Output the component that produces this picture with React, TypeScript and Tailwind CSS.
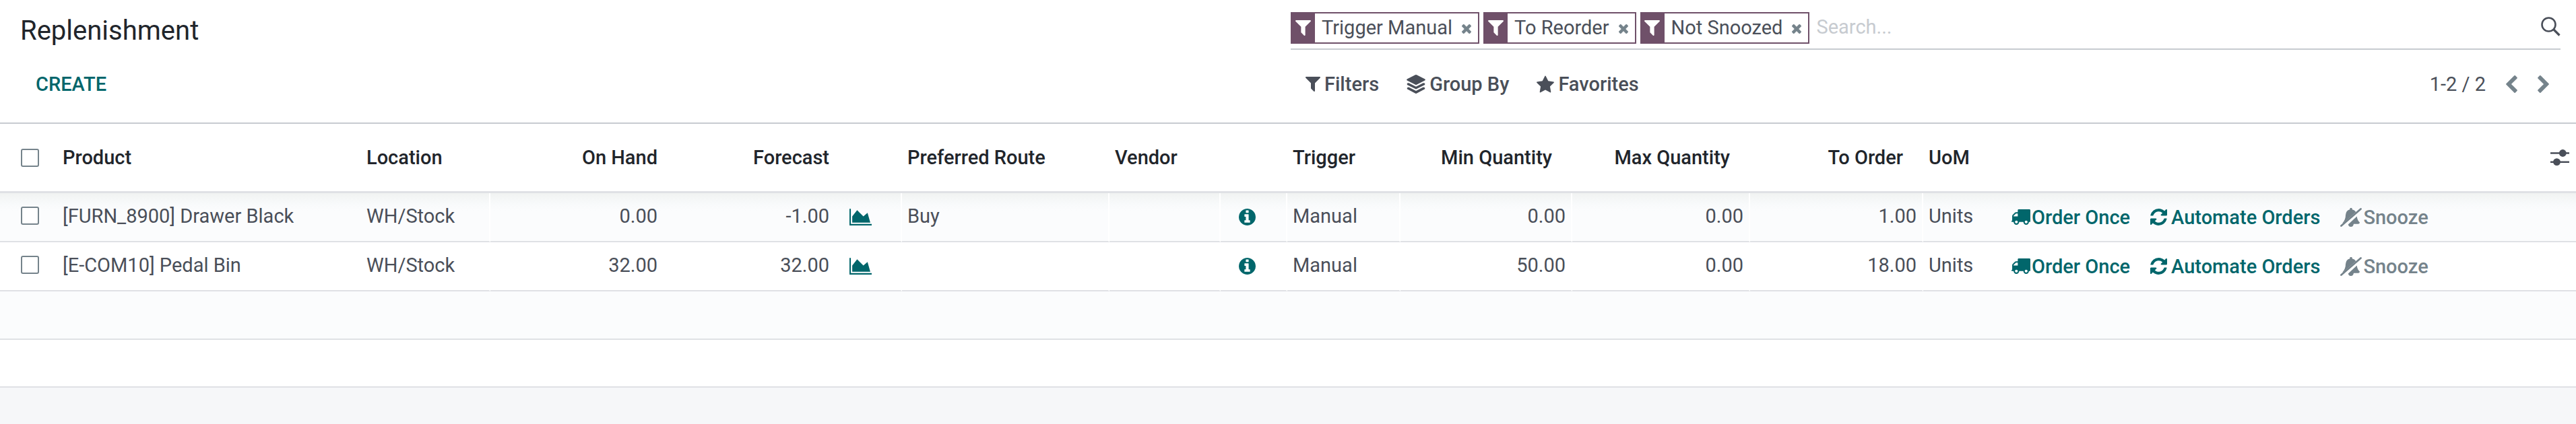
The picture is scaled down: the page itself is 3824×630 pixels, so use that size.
import { ReactNode } from "react";

type IconProps = { className?: string };

function FilterIcon({ className }: IconProps) {
  return (
    <svg viewBox="192 256 1408 1408" className={className} fill="currentColor" aria-hidden="true">
      <path d="M1595 295q17 41-14 70l-493 493v742q0 42-39 59-13 5-25 5-27 0-45-19l-256-256q-19-19-19-45v-486l-493-493q-31-29-14-70 17-39 59-39h1280q42 0 59 39z" />
    </svg>
  );
}

function TimesIcon({ className }: IconProps) {
  return (
    <svg viewBox="302 366 1188 1188" className={className} fill="currentColor" aria-hidden="true">
      <path d="M1490 1322q0 40-28 68l-136 136q-28 28-68 28t-68-28l-294-294-294 294q-28 28-68 28t-68-28l-136-136q-28-28-28-68t28-68l294-294-294-294q-28-28-28-68t28-68l136-136q28-28 68-28t68 28l294 294 294-294q28-28 68-28t68 28l136 136q28 28 28 68t-28 68l-294 294 294 294q28 28 28 68z" />
    </svg>
  );
}

function StarIcon({ className }: IconProps) {
  return (
    <svg viewBox="64 32 1664 1587" className={className} fill="currentColor" aria-hidden="true">
      <path d="M1728 647q0 22-26 48l-363 354 86 500q1 7 1 20 0 21-10.500 35.500t-30.500 14.500q-19 0-40-12l-449-236-449 236q-22 12-40 12-21 0-31.500-14.500t-10.500-35.500q0-6 2-20l86-500-364-354q-25-27-25-48 0-37 56-46l502-73 225-455q19-41 49-41t49 41l225 455 502 73q56 9 56 46z" />
    </svg>
  );
}

function LayersIcon({ className }: IconProps) {
  return (
    <svg viewBox="0 0 28 28" className={className} fill="currentColor" aria-hidden="true">
      <path d="M13 .3q1-.5 2 0L27.300 6.600q1 .9 0 1.800L15 14.700q-1 .5-2 0L.7 8.400q-1-.9 0-1.800z" />
      <path d="M.8 12.700 3.200 12.200 14 17.700 24.800 12.200 27.200 12.700V15L14 21.500.8 15z" />
      <path d="M.8 19.200 3.200 18.500 14 24 24.800 18.500 27.200 19.200V21.300L15 27.700q-1 .5-2 0L.8 21.300z" />
    </svg>
  );
}

function SearchIcon({ className }: IconProps) {
  return (
    <svg viewBox="0 0 29 29" className={className} fill="none" stroke="currentColor" strokeWidth="2.600" aria-hidden="true">
      <circle cx="11.500" cy="11.500" r="10" />
      <path d="M18.500 18.500 27.500 27.500" strokeWidth="3.200" />
    </svg>
  );
}

function ChevronLeftIcon({ className }: IconProps) {
  return (
    <svg viewBox="410 26 1036 1612" className={className} fill="currentColor" aria-hidden="true">
      <path d="M1427 301l-531 531 531 531q19 19 19 45t-19 45l-166 166q-19 19-45 19t-45-19l-742-742q-19-19-19-45t19-45l742-742q19-19 45-19t45 19l166 166q19 19 19 45t-19 45z" />
    </svg>
  );
}

function ChevronRightIcon({ className }: IconProps) {
  return (
    <svg viewBox="346 26 1036 1612" className={className} fill="currentColor" aria-hidden="true">
      <path d="M1363 877l-742 742q-19 19-45 19t-45-19l-166-166q-19-19-19-45t19-45l531-531-531-531q-19-19-19-45t19-45l166-166q19-19 45-19t45 19l742 742q19 19 19 45t-19 45z" />
    </svg>
  );
}

function SlidersIcon({ className }: IconProps) {
  return (
    <svg viewBox="0 0 28 24" className={className} fill="currentColor" aria-hidden="true">
      <path d="M0 4.300h28v2.400H0zM0 17.500h28v2.400H0z" />
      <circle cx="18.300" cy="5.500" r="5.400" />
      <circle cx="9.500" cy="18.600" r="5.400" />
    </svg>
  );
}

function AreaChartIcon({ className }: IconProps) {
  return (
    <svg viewBox="0 128 2048 1536" className={className} fill="currentColor" aria-hidden="true">
      <path d="M2048 1536v128h-2048v-1536h128v1408h1920zm-384-1024l256 896h-1664v-576l448-576 576 576z" />
    </svg>
  );
}

function InfoIcon({ className }: IconProps) {
  return (
    <svg viewBox="128 128 1536 1536" className={className} fill="currentColor" aria-hidden="true">
      <path d="M1152 1376v-160q0-14-9-23t-23-9h-96v-512q0-14-9-23t-23-9h-320q-14 0-23 9t-9 23v160q0 14 9 23t23 9h96v320h-96q-14 0-23 9t-9 23v160q0 14 9 23t23 9h448q14 0 23-9t9-23zm-128-896v-160q0-14-9-23t-23-9h-192q-14 0-23 9t-9 23v160q0 14 9 23t23 9h192q14 0 23-9t9-23zm640 416q0 209-103 385.500t-279.500 279.500-385.500 103-385.500-103-279.500-279.500-103-385.500 103-385.500 279.500-279.500 385.500-103 385.500 103 279.500 279.500 103 385.500z" />
    </svg>
  );
}

function TruckIcon({ className }: IconProps) {
  return (
    <svg viewBox="64 256 1728 1408" className={className} fill="currentColor" aria-hidden="true">
      <path d="M640 1408q0-52-38-90t-90-38-90 38-38 90 38 90 90 38 90-38 38-90zm-384-512h384v-256h-158q-13 0-22 9l-195 195q-9 9-9 22v30zm1280 512q0-52-38-90t-90-38-90 38-38 90 38 90 90 38 90-38 38-90zm256-1088v1024q0 15-4 26.500t-13.500 18.500-16.500 11.500-23.500 6-22.500 2-25.500 0-22.500-.5q0 106-75 181t-181 75-181-75-75-181h-384q0 106-75 181t-181 75-181-75-75-181h-64q-3 0-22.500.5t-25.500 0-22.500-2-23.500-6-16.500-11.500-13.500-18.500-4-26.500q0-26 19-45t45-19v-320q0-8-.5-35t0-38 2.500-34.500 6.500-37 14-30.500 22.500-30l198-198q19-19 50.500-32t58.500-13h160v-192q0-26 19-45t45-19h1024q26 0 45 19t19 45z" />
    </svg>
  );
}

function RefreshIcon({ className }: IconProps) {
  return (
    <svg viewBox="128 128 1536 1536" className={className} fill="currentColor" aria-hidden="true">
      <path d="M1639 1056q0 5-1 7-64 268-268 434.500t-478 166.500q-146 0-282.500-55t-243.500-157l-129 129q-19 19-45 19t-45-19-19-45v-448q0-26 19-45t45-19h448q26 0 45 19t19 45-19 45l-137 137q71 66 161 102t187 36q134 0 250-65t186-179q11-17 53-117 8-23 30-23h192q13 0 22.500 9.500t9.500 22.500zm25-800v448q0 26-19 45t-45 19h-448q-26 0-45-19t-19-45 19-45l138-138q-148-137-349-137-134 0-250 65t-186 179q-11 17-53 117-8 23-30 23h-199q-13 0-22.500-9.500t-9.500-22.500v-7q65-268 270-434.500t480-166.500q146 0 284 55.500t245 156.500l130-129q19-19 45-19t45 19 19 45z" />
    </svg>
  );
}

function BellSlashIcon({ className }: IconProps) {
  return (
    <svg viewBox="0 0 32 28" className={className} fill="currentColor" aria-hidden="true">
      <path d="M1.500 26.500 30.500 1.500" stroke="currentColor" strokeWidth="2.800" strokeLinecap="round" />
      <path d="M14.300 1.500a1.700 1.700 0 0 1 3.400 0v.8Q21.300 3 23.300 6L4.500 22.500H3.300Q8 17.500 8 10.500 8.500 3.600 14.300 2.300z" />
      <path d="M24.700 12.500Q25.300 18.300 29 21.500 29 23.500 27 23.700H20Q19.300 27.900 15.800 28 12.600 28 11.800 24.500z" />
    </svg>
  );
}

function Facet({ label }: { label: string }) {
  return (
    <div className="flex h-[47px] items-stretch border-2 border-[#6f5069] bg-white">
      <span className="flex w-[34px] items-center justify-center bg-[#6f5069] pr-0.5 text-white">
        <FilterIcon className="size-[23px]" />
      </span>
      <span className="flex items-center pl-2.5 pr-3.5">{label}</span>
      <button type="button" aria-label={`Remove ${label}`} className="pt-1 pr-2.5 text-[#75838b]">
        <TimesIcon className="size-3.5" />
      </button>
    </div>
  );
}

function MenuButton({ icon, label }: { icon: ReactNode; label: string }) {
  return (
    <button type="button" className="flex items-center gap-1.5 font-medium">
      {icon}
      {label}
    </button>
  );
}

function ActionButton({ icon, label, muted = false }: { icon: ReactNode; label: string; muted?: boolean }) {
  return (
    <button
      type="button"
      className={
        muted
          ? "flex items-center gap-0.5 font-medium text-[#75838b]"
          : "flex items-center gap-0.5 font-medium text-[#01666b]"
      }
    >
      {icon}
      {label}
    </button>
  );
}

function Tick({ label }: { label: string }) {
  return (
    <input
      type="checkbox"
      aria-label={label}
      className="block size-[27px] appearance-none rounded-[3px] border-2 border-[#75838b] bg-white checked:bg-[#01666b]"
    />
  );
}

type Rule = {
  product: string;
  location: string;
  onHand: string;
  forecast: string;
  route: string;
  vendor: string;
  trigger: string;
  min: string;
  max: string;
  toOrder: string;
  uom: string;
};

const rules: Rule[] = [
  {
    product: "[FURN_8900] Drawer Black",
    location: "WH/Stock",
    onHand: "0.00",
    forecast: "-1.00",
    route: "Buy",
    vendor: "",
    trigger: "Manual",
    min: "0.00",
    max: "0.00",
    toOrder: "1.00",
    uom: "Units",
  },
  {
    product: "[E-COM10] Pedal Bin",
    location: "WH/Stock",
    onHand: "32.00",
    forecast: "32.00",
    route: "",
    vendor: "",
    trigger: "Manual",
    min: "50.00",
    max: "0.00",
    toOrder: "18.00",
    uom: "Units",
  },
];

const line = "border-b-2 border-b-[#dfe1e5]";
const text = "border-b-2 border-b-[#dfe1e5] pb-1";
const split = "border-b-2 border-b-[#dfe1e5] border-r-2 border-r-white";
const splitText = "border-b-2 border-b-[#dfe1e5] border-r-2 border-r-white pb-1";

function RuleRow({ rule }: { rule: Rule }) {
  return (
    <tr className="h-[73px] odd:bg-[linear-gradient(#f1f3f2,#f8fafb_16px,#fbfcfd_26px)]">
      <td className={`${text} pl-[31px]`}>
        <Tick label={`Select ${rule.product}`} />
      </td>
      <td className={`${text} pl-2.5`}>{rule.product}</td>
      <td className={`${splitText} pl-2`}>{rule.location}</td>
      <td className={`${text} pr-2 text-right`}>{rule.onHand}</td>
      <td className={`${text} pr-2 text-right`}>{rule.forecast}</td>
      <td className={`${split} pl-[22px]`}>
        <button type="button" aria-label="Forecast report" className="block text-[#01666b]">
          <AreaChartIcon className="h-[25px] w-[33px]" />
        </button>
      </td>
      <td className={`${splitText} pl-2`}>{rule.route}</td>
      <td className={`${splitText} pl-2`}>{rule.vendor}</td>
      <td className={`${split} pl-[27px]`}>
        <button type="button" aria-label="Replenishment information" className="block text-[#01666b]">
          <InfoIcon className="size-[25px]" />
        </button>
      </td>
      <td className={`${splitText} pl-2`}>{rule.trigger}</td>
      <td className={`${splitText} pr-2 text-right`}>{rule.min}</td>
      <td className={`${splitText} pr-2 text-right`}>{rule.max}</td>
      <td className={`${splitText} pr-2 text-right`}>{rule.toOrder}</td>
      <td className={`${text} pl-2`}>{rule.uom}</td>
      <td className={`${line} pl-4`}>
        <div className="flex items-center gap-[30px]">
          <ActionButton icon={<TruckIcon className="h-[23px] w-7" />} label="Order Once" />
          <ActionButton icon={<RefreshIcon className="mr-1 size-[25px]" />} label="Automate Orders" />
          <ActionButton muted icon={<BellSlashIcon className="h-7 w-8" />} label="Snooze" />
        </div>
      </td>
    </tr>
  );
}

export default function App() {
  return (
    <div className="flex min-h-screen flex-col bg-[#f6f7f9] font-[Roboto,sans-serif] text-[29px] leading-9 whitespace-nowrap text-[#4a4f59]">
      <header className="grid grid-cols-2 border-b-2 border-[#c7cbd0] bg-white">
        <div className="flex h-[91px] items-center pl-[30px]">
          <h1 className="text-[40px] leading-[48px] text-[#21252b]">Replenishment</h1>
        </div>
        <div className="flex h-[91px] items-start pl-1 pr-[23px]">
          <div className="mt-2.5 flex h-16 flex-1 items-center gap-1.5 border-b-2 border-[#c7cbd0]">
            <Facet label="Trigger Manual" />
            <Facet label="To Reorder" />
            <Facet label="Not Snoozed" />
            <input
              type="search"
              aria-label="Search"
              placeholder="Search..."
              className="min-w-0 flex-1 bg-transparent pb-0.5 pl-1 outline-none placeholder:text-[#c7cbd0]"
            />
            <button type="button" aria-label="Search" className="pb-1">
              <SearchIcon className="size-[29px]" />
            </button>
          </div>
        </div>
        <div className="flex h-[91px] items-start pl-[53px] pt-4">
          <button type="button" className="font-medium text-[#01666b]">
            CREATE
          </button>
        </div>
        <div className="flex h-[91px] items-start justify-between pl-[26px] pr-10 pt-4">
          <div className="flex gap-[41px]">
            <MenuButton icon={<FilterIcon className="size-[22px]" />} label="Filters" />
            <MenuButton icon={<LayersIcon className="size-7" />} label="Group By" />
            <MenuButton icon={<StarIcon className="size-[26px]" />} label="Favorites" />
          </div>
          <nav className="flex items-center gap-[30px]" aria-label="Pager">
            <span>1-2 / 2</span>
            <button type="button" aria-label="Previous" className="text-[#75838b]">
              <ChevronLeftIcon className="h-[26px] w-[17px]" />
            </button>
            <button type="button" aria-label="Next" className="text-[#75838b]">
              <ChevronRightIcon className="h-[26px] w-[17px]" />
            </button>
          </nav>
        </div>
      </header>

      <table className="w-full table-fixed border-separate border-spacing-0 bg-white">
        <colgroup>
          <col className="w-[83px]" />
          <col className="w-[453px]" />
          <col className="w-[192px]" />
          <col className="w-[256px]" />
          <col className="w-[255px]" />
          <col className="w-[100px]" />
          <col className="w-[308px]" />
          <col className="w-[165px]" />
          <col className="w-[99px]" />
          <col className="w-[168px]" />
          <col className="w-[255px]" />
          <col className="w-[264px]" />
          <col className="w-[257px]" />
          <col className="w-[115px]" />
          <col />
        </colgroup>
        <thead className="text-[#21252b]">
          <tr className="h-[103px] [&>th]:border-b-[3px] [&>th]:border-[#dfe1e5] [&>th]:text-left [&>th]:font-medium">
            <th className="pl-[31px]">
              <Tick label="Select all" />
            </th>
            <th className="pl-2.5">Product</th>
            <th className="pl-2">Location</th>
            <th className="pr-2 text-right!">On Hand</th>
            <th className="pr-2 text-right!">Forecast</th>
            <th />
            <th className="pl-2">Preferred Route</th>
            <th className="pl-2" colSpan={2}>
              Vendor
            </th>
            <th className="pl-2">Trigger</th>
            <th className="pr-[30px] text-right!">Min Quantity</th>
            <th className="pr-[30px] text-right!">Max Quantity</th>
            <th className="pr-[30px] text-right!">To Order</th>
            <th className="pl-2">UoM</th>
            <th>
              <div className="flex justify-end pr-2.5">
                <button type="button" aria-label="Optional columns" className="text-[#4a4f59]">
                  <SlidersIcon className="h-6 w-7" />
                </button>
              </div>
            </th>
          </tr>
        </thead>
        <tbody>
          {rules.map((rule) => (
            <RuleRow key={rule.product} rule={rule} />
          ))}
          <tr className="h-[72px] bg-[#fbfcfd]">
            <td colSpan={15} className={line} />
          </tr>
          <tr className="h-[71px]">
            <td colSpan={15} className={line} />
          </tr>
        </tbody>
      </table>
    </div>
  );
}
